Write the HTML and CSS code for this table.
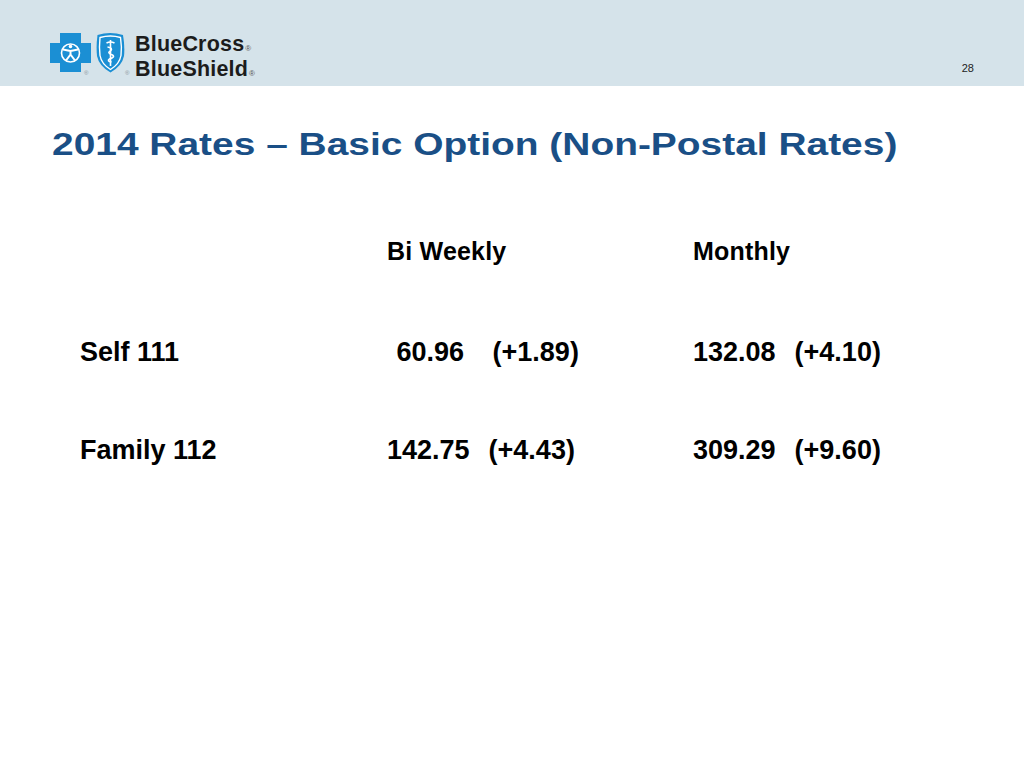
FILE: index.html
```html
<!DOCTYPE html>
<html>
<head>
<meta charset="utf-8">
<link rel="stylesheet" href="styles.css">
</head>
<body>
<header class="band">
  <div class="logo">
    <svg class="cross" width="42" height="44" viewBox="0 0 42 44">
      <path d="M10 1H31V11H41V31H31V40H10V31H0V11H10Z" fill="#1b8fd4"/>
      <circle cx="20.5" cy="21" r="9" fill="none" stroke="#fff" stroke-width="1.6"/>
      <circle cx="20.5" cy="14.5" r="1.8" fill="#fff"/>
      <path d="M13 17.5L20.5 19L28 17.5M20.5 19V22.5M20.5 22.5L16 28.5M20.5 22.5L25 28.5" fill="none" stroke="#fff" stroke-width="2" stroke-linejoin="round"/>
      <text x="34" y="43" class="reg">®</text>
    </svg>
    <svg class="shield" width="34" height="44" viewBox="0 0 34 44">
      <path d="M1.5 3Q14 -1 27 3Q29 14 28 24Q26 34 14.5 40.5Q3 34 1 24Q0 14 1.5 3Z" fill="#1b8fd4"/>
      <path d="M4 5.5Q14.5 2.5 24.5 5.5Q26 15 25 23.5Q23.5 32 14.5 37.5Q5.5 32 4 23.5Q3 15 4 5.5Z" fill="none" stroke="#fff" stroke-width="1.4"/>
      <path d="M14.5 8V34" stroke="#fff" stroke-width="1.6"/>
      <path d="M10.5 11Q14.5 9 18.5 11M11.5 15Q17.5 16 14.5 19Q10.5 21 16.5 23Q19.5 25 13.5 27Q10.5 29 15.5 30" fill="none" stroke="#fff" stroke-width="1.6"/>
      <text x="29" y="43" class="reg">®</text>
    </svg>
    <div class="wordmark">
      <div>BlueCross<span class="r">®</span></div>
      <div>BlueShield<span class="r">®</span></div>
    </div>
  </div>
  <div class="pagenum">28</div>
</header>

<h1 class="title"><span class="title-text">2014 Rates – Basic Option (Non-Postal Rates)</span></h1>

<div class="rates">
  <div class="head"></div>
  <div class="head">Bi Weekly</div>
  <div class="head">Monthly</div>

  <div class="cell">Self 111</div>
  <div class="cell pre"> 60.96   (+1.89)</div>
  <div class="cell pre">132.08  (+4.10)</div>

  <div class="cell">Family 112</div>
  <div class="cell pre">142.75  (+4.43)</div>
  <div class="cell pre">309.29  (+9.60)</div>
</div>
</body>
</html>
```

FILE: styles.css
```css
html, body {
  margin: 0;
  padding: 0;
  background: #ffffff;
  font-family: "Liberation Sans", Arial, sans-serif;
  width: 1024px;
  height: 768px;
  overflow: hidden;
}

.band {
  height: 86px;
  background: #d5e3ea;
  display: flex;
  justify-content: space-between;
  align-items: flex-start;
  box-sizing: border-box;
  padding: 0 50px 0 50px;
}

.logo {
  display: flex;
  align-items: flex-start;
  margin-top: 32px;
}

.cross { display: block; }
.shield { display: block; margin-left: 4px; }

.reg {
  font-family: "Liberation Sans", Arial, sans-serif;
  font-size: 6px;
  fill: #8a969c;
}

.wordmark {
  margin-left: 5px;
  margin-top: 2px;
  font-weight: bold;
  font-size: 21.5px;
  line-height: 21px;
  color: #1c1c1c;
  letter-spacing: 0.2px;
}

.wordmark .r {
  font-size: 8px;
  font-weight: normal;
  color: #555;
  margin-left: 1px;
  letter-spacing: 0;
}

.pagenum {
  margin-top: 62px;
  font-size: 11px;
  color: #222;
}

.title {
  margin: 40px 0 0 52px;
  font-size: 31px;
  line-height: 37px;
  font-weight: bold;
  color: #1a4f86;
}

.title-text {
  display: inline-block;
  transform: scaleX(1.255);
  transform-origin: left center;
  white-space: nowrap;
}

.rates {
  display: grid;
  grid-template-columns: 307px 306px auto;
  margin: 74px 0 0 80px;
  row-gap: 66px;
  color: #000;
  font-weight: bold;
}

.head {
  font-size: 25px;
  line-height: 28px;
  margin-bottom: 5px;
  letter-spacing: 0.2px;
}

.cell {
  font-size: 27px;
  line-height: 32px;
}

.pre {
  white-space: pre;
  word-spacing: 2px;
}
```
